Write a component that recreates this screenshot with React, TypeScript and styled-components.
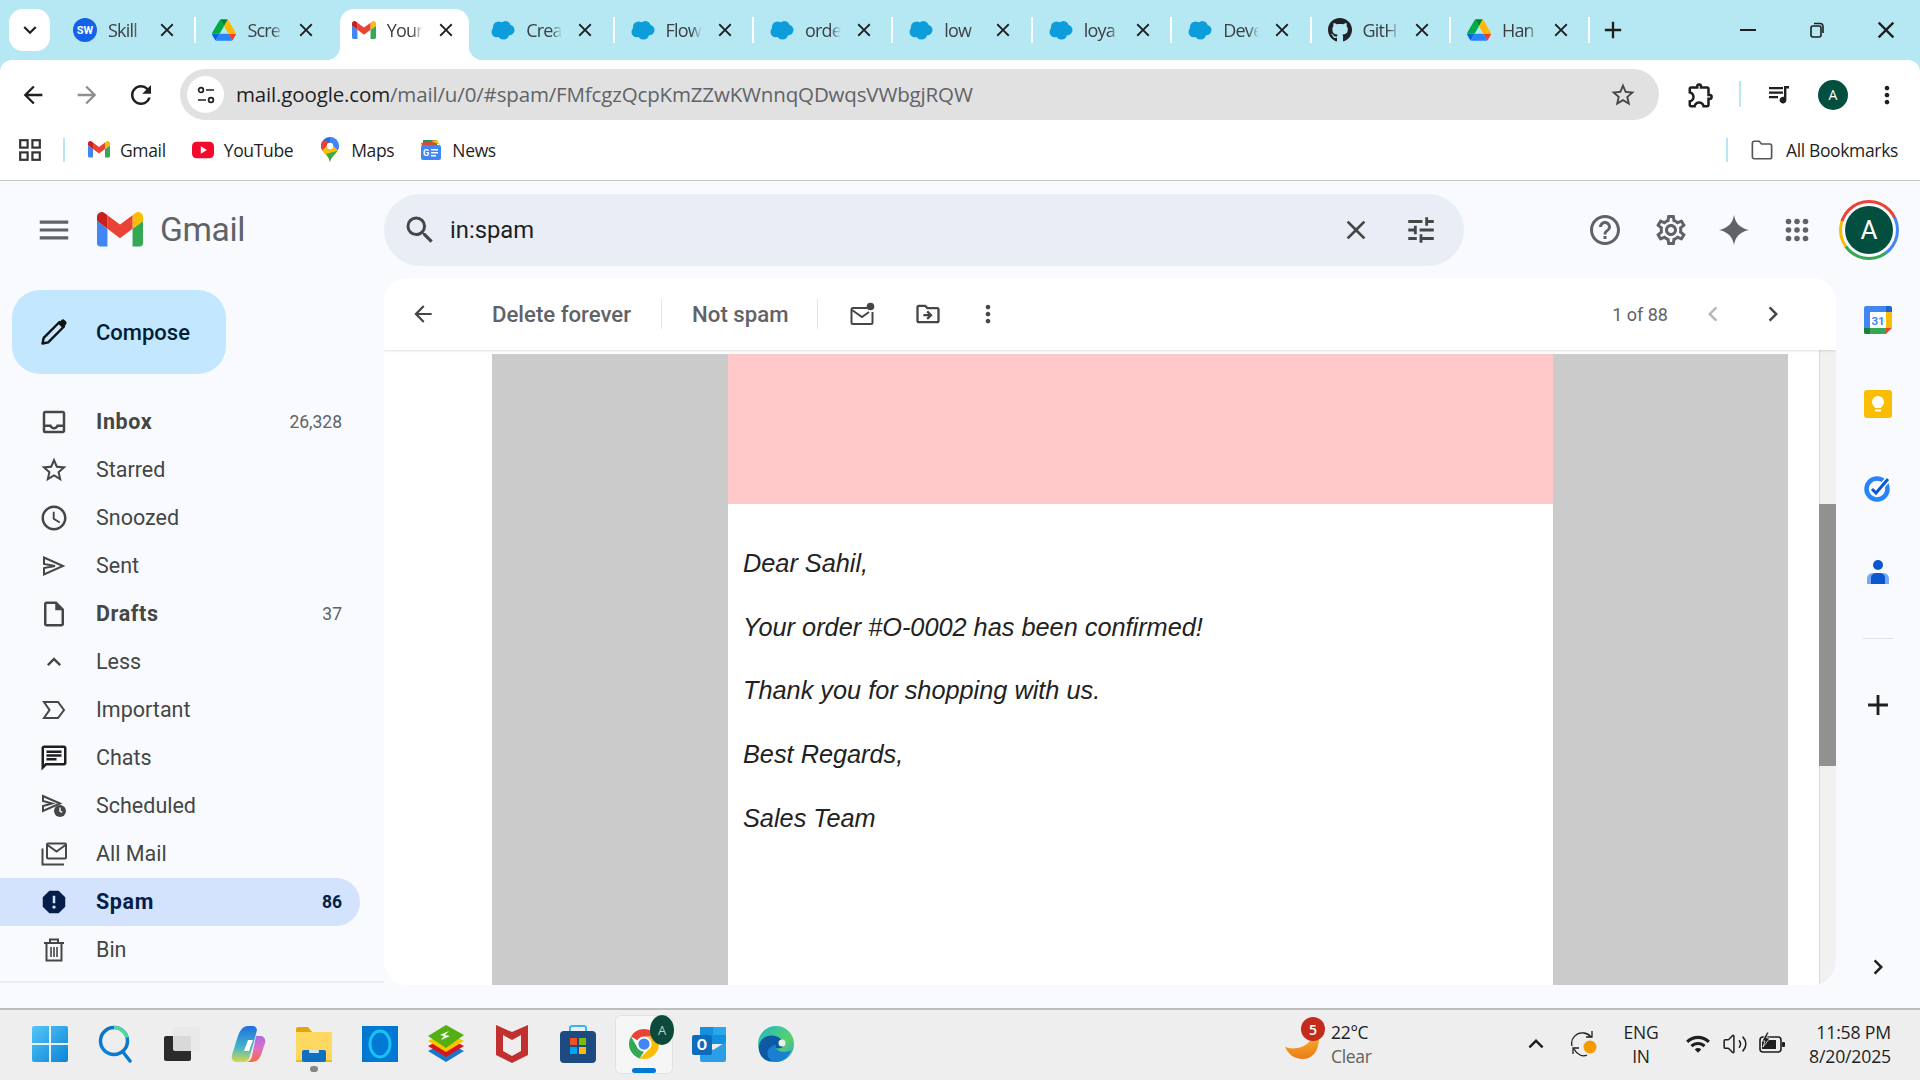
import React from 'react';
import styled, { createGlobalStyle } from 'styled-components';
import { FaGithub } from 'react-icons/fa';
import {
  MdAdd,
  MdArrowBack,
  MdArrowForward,
  MdChevronLeft,
  MdChevronRight,
  MdClose,
  MdExpandLess,
  MdExpandMore,
  MdHelpOutline,
  MdMenu,
  MdMoreVert,
  MdOutlineChat,
  MdOutlineDriveFileMove,
  MdOutlineExtension,
  MdOutlineInsertDriveFile,
  MdOutlineInbox,
  MdOutlineSettings,
  MdOutlineWatchLater,
  MdRefresh,
  MdReport,
  MdSearch,
  MdStarBorder,
  MdTune,
  MdWifi,
} from 'react-icons/md';
import { Volume2 } from 'lucide-react';

const GlobalStyle = createGlobalStyle`
  html, body { margin: 0; padding: 0; background: #fff; }
  body { width: 1920px; height: 1080px; overflow: hidden; font-family: Roboto, "Liberation Sans", sans-serif; }
  * { box-sizing: border-box; }
`;

const uiFont = '"Open Sans", "Noto Sans", sans-serif';

const Page = styled.div`
  width: 1920px;
  height: 1080px;
  display: flex;
  flex-direction: column;
  background: #b6e8f4;
`;

/* ---------- tab strip ---------- */
const TabStrip = styled.div`
  height: 60px;
  display: flex;
  align-items: flex-start;
  padding-left: 9px;
  flex-shrink: 0;
`;

const TabSearch = styled.div`
  width: 41px;
  height: 42px;
  margin-top: 9px;
  margin-right: 6px;
  border-radius: 14px;
  background: #fff;
  display: flex;
  align-items: center;
  justify-content: center;
  color: #1f1f1f;
`;

const Tab = styled.div<{ $active?: boolean; $noSep?: boolean }>`
  position: relative;
  width: ${(p) => (p.$active ? '129.4px' : '139.4px')};
  height: ${(p) => (p.$active ? '51px' : '42px')};
  margin: ${(p) => (p.$active ? '9px 5px 0' : '9px 0 0')};
  padding-left: ${(p) => (p.$active ? '12px' : '17px')};
  display: flex;
  align-items: center;
  color: #1f1f1f;
  background: ${(p) => (p.$active ? '#fff' : 'transparent')};
  border-radius: 14px 14px 0 0;
  ${(p) => (p.$active ? 'padding-bottom: 9px;' : '')}
  ${(p) =>
    p.$noSep
      ? ''
      : `&::after {
    content: '';
    position: absolute;
    right: -1px;
    top: 8px;
    width: 2px;
    height: 26px;
    background: #fff;
  }`}
  ${(p) =>
    p.$active
      ? `&::before {
    content: '';
    position: absolute;
    left: -14px;
    right: -14px;
    bottom: 0;
    height: 14px;
    background:
      radial-gradient(circle at 0 0, #b6e8f4 14px, #fff 14.5px) left bottom / 14px 14px no-repeat,
      radial-gradient(circle at 100% 0, #b6e8f4 14px, #fff 14.5px) right bottom / 14px 14px no-repeat;
  }`
      : ''}
`;

const FavSlot = styled.span`
  width: 24px;
  height: 24px;
  flex-shrink: 0;
  display: flex;
  align-items: center;
  justify-content: center;
`;

const TabTitle = styled.span`
  width: 36px;
  margin-left: 11px;
  margin-right: 2px;
  overflow: hidden;
  white-space: nowrap;
  font: 400 18px ${uiFont};
  letter-spacing: -0.8px;
  color: #3c4043;
  -webkit-mask-image: linear-gradient(90deg, #000 70%, transparent 100%);
  mask-image: linear-gradient(90deg, #000 70%, transparent 100%);
`;

const TabClose = styled.span`
  margin-left: 10px;
  display: flex;
  color: #1f1f1f;
`;

const NewTab = styled.div`
  width: 48px;
  height: 42px;
  margin-top: 9px;
  display: flex;
  align-items: center;
  justify-content: center;
  color: #1f1f1f;
`;

const WindowControls = styled.div`
  margin-left: auto;
  height: 60px;
  display: flex;
  color: #1f1f1f;
`;

const WindowButton = styled.div`
  width: 69px;
  height: 60px;
  display: flex;
  align-items: center;
  justify-content: center;
`;

/* ---------- browser toolbar ---------- */
const BrowserBar = styled.div`
  height: 65px;
  flex-shrink: 0;
  background: #fff;
  border-radius: 12px 12px 0 0;
  display: flex;
  align-items: flex-start;
  padding: 9px 0 0 6px;
`;

const NavButton = styled.div<{ $muted?: boolean }>`
  width: 54px;
  height: 51px;
  display: flex;
  align-items: center;
  justify-content: center;
  color: ${(p) => (p.$muted ? '#8f8f8f' : '#1f1f1f')};
`;

const Omnibox = styled.div`
  width: 1479px;
  height: 51px;
  margin-left: 12px;
  margin-right: 17px;
  padding: 0 22px 0 7px;
  background: #e1e1e1;
  border-radius: 26px;
  display: flex;
  align-items: center;
  color: #474747;
`;

const SiteChip = styled.span`
  width: 37px;
  height: 37px;
  border-radius: 50%;
  background: #fff;
  display: flex;
  align-items: center;
  justify-content: center;
  flex-shrink: 0;
`;

const UrlText = styled.span`
  margin-left: 12px;
  padding-bottom: 2px;
  flex: 1;
  font: 400 20.5px ${uiFont};
  letter-spacing: -0.15px;
  color: #5f6368;
  white-space: nowrap;
`;

const UrlHost = styled.span`
  color: #1f1f1f;
`;

const BarDivider = styled.span`
  width: 2px;
  height: 26px;
  margin: 12px 13px 0;
  background: #b6e8f4;
`;

const ToolSlot = styled.div<{ $w: number }>`
  width: ${(p) => p.$w}px;
  height: 51px;
  display: flex;
  align-items: center;
  justify-content: center;
  color: #1f1f1f;
`;

const MiniAvatar = styled.span`
  width: 30px;
  height: 30px;
  border-radius: 50%;
  background: #024e3f;
  color: #fff;
  font: 400 14px ${uiFont};
  display: flex;
  align-items: center;
  justify-content: center;
`;

/* ---------- bookmarks ---------- */
const BookmarkBar = styled.div`
  height: 56px;
  flex-shrink: 0;
  background: #fff;
  border-bottom: 1px solid #c8c8c8;
  padding: 0 22px 6px 19px;
  display: flex;
  align-items: center;
  gap: 26px;
`;

const BookmarkDivider = styled.span`
  width: 2px;
  height: 24px;
  margin: 0 -3px 0 -4px;
  background: #b6e8f4;
`;

const Bookmark = styled.div<{ $gap?: number }>`
  display: flex;
  align-items: center;
  gap: ${(p) => p.$gap ?? 10}px;
  font: 400 17.5px ${uiFont};
  letter-spacing: -0.35px;
  color: #1f1f1f;
`;

const BookmarkIcon = styled.span`
  width: 22px;
  height: 24px;
  display: flex;
  align-items: center;
  justify-content: center;
`;

const BookmarkEnd = styled.div`
  margin-left: auto;
  display: flex;
  align-items: center;
  gap: 26px;
`;

/* ---------- gmail ---------- */
const Gmail = styled.div`
  flex: 1;
  min-height: 0;
  background: #f8fafd;
  display: flex;
  flex-direction: column;
`;

const GmailHeader = styled.div`
  height: 97px;
  flex-shrink: 0;
  display: flex;
  align-items: flex-start;
`;

const Brand = styled.div`
  width: 384px;
  height: 97px;
  padding-left: 35px;
  display: flex;
  align-items: center;
  gap: 24px;
  color: #5f6368;
`;

const BrandLogo = styled.div`
  display: flex;
  align-items: center;
  gap: 17px;
`;

const BrandName = styled.span`
  font: 400 33.6px Roboto, sans-serif;
  letter-spacing: -0.4px;
  color: #5f6368;
`;

const SearchBar = styled.div`
  width: 1080px;
  height: 72px;
  margin-top: 13px;
  padding: 0 26px 0 18px;
  background: #e9eef6;
  border-radius: 36px;
  display: flex;
  align-items: center;
  gap: 32px;
  color: #444746;
`;

const SearchInput = styled.span`
  flex: 1;
  margin-left: -20px;
  font: 400 23.8px Roboto, sans-serif;
  color: #1f1f1f;
`;

const HeaderTools = styled.div`
  flex: 1;
  height: 72px;
  margin-top: 13px;
  padding-left: 108px;
  display: flex;
  align-items: center;
  color: #5f6368;
`;

const HeaderTool = styled.span<{ $w: number }>`
  width: ${(p) => p.$w}px;
  display: flex;
  justify-content: center;
`;

const AvatarRing = styled.span`
  width: 60px;
  height: 60px;
  margin-left: 9px;
  border-radius: 50%;
  padding: 3px;
  background: conic-gradient(#ea4335 0 18%, #4285f4 18% 40%, #34a853 40% 65%, #fbbc04 65% 80%, #ea4335 80%);
  display: flex;
  flex-shrink: 0;
`;

const AvatarGap = styled.span`
  flex: 1;
  border-radius: 50%;
  padding: 3px;
  background: #f8fafd;
  display: flex;
`;

const AvatarFace = styled.span`
  flex: 1;
  border-radius: 50%;
  background: #024e3f;
  color: #fff;
  font: 400 26px Roboto, sans-serif;
  display: flex;
  align-items: center;
  justify-content: center;
`;

const GmailBody = styled.div`
  flex: 1;
  min-height: 0;
  display: flex;
`;

const Sidebar = styled.nav`
  width: 384px;
  flex-shrink: 0;
  padding-top: 12px;
  display: flex;
  flex-direction: column;
`;

const Compose = styled.div`
  width: 214px;
  height: 84px;
  margin: 0 0 24px 12px;
  padding-left: 27px;
  border-radius: 28px;
  background: #c2e7ff;
  display: flex;
  align-items: center;
  gap: 27px;
  font: 500 22px Roboto, sans-serif;
  color: #001d35;
`;

const NavRow = styled.div<{ $active?: boolean; $bold?: boolean }>`
  width: 360px;
  height: 48px;
  flex-shrink: 0;
  padding: 0 18px 0 39px;
  border-radius: 0 24px 24px 0;
  display: flex;
  align-items: center;
  background: ${(p) => (p.$active ? '#d3e3fd' : 'transparent')};
  color: ${(p) => (p.$active ? '#041e49' : '#444746')};
  font: ${(p) => (p.$bold ? 700 : 400)} 21.5px Roboto, sans-serif;
  letter-spacing: ${(p) => (p.$bold ? '0.6px' : '0')};
`;

const NavIcon = styled.span`
  width: 30px;
  height: 30px;
  flex-shrink: 0;
  margin-right: 27px;
  display: flex;
  align-items: center;
  justify-content: center;
`;

const NavLabel = styled.span<{ $bold?: boolean }>`
  flex: 1;
  margin-top: -1px;
  color: ${(p) => (p.$bold ? 'inherit' : '#444746')};
`;

const NavCount = styled.span<{ $active?: boolean }>`
  font: ${(p) => (p.$active ? 700 : 400)} 17.5px Roboto, sans-serif;
  letter-spacing: 0;
  color: ${(p) => (p.$active ? '#041e49' : '#5f6368')};
`;

const SidebarRule = styled.div`
  margin-top: 7px;
  height: 2px;
  background: #ebedf0;
`;

const MailCard = styled.main`
  width: 1452px;
  height: 707px;
  flex-shrink: 0;
  background: #fff;
  border-radius: 24px;
  overflow: hidden;
  display: flex;
  flex-direction: column;
`;

const MailToolbar = styled.div`
  height: 72px;
  flex-shrink: 0;
  padding: 0 45px 0 19px;
  display: flex;
  align-items: center;
  color: #444746;
  box-shadow: 0 1px 2px rgba(60, 64, 67, 0.16);
  position: relative;
`;

const ToolIcon = styled.span<{ $left: number; $w?: number; $faded?: boolean }>`
  width: ${(p) => p.$w ?? 36}px;
  margin-left: ${(p) => p.$left}px;
  display: flex;
  justify-content: center;
  color: ${(p) => (p.$faded ? '#b4b6b8' : '#444746')};
`;

const ActionText = styled.span<{ $left: number }>`
  margin-left: ${(p) => p.$left}px;
  font: 500 22.2px Roboto, sans-serif;
  color: #5f6368;
`;

const ToolRule = styled.span<{ $left: number }>`
  margin-left: ${(p) => p.$left}px;
  width: 1px;
  height: 30px;
  background: #e6e6e6;
`;

const Pager = styled.div`
  margin-left: auto;
  display: flex;
  align-items: center;
  font: 400 18px Roboto, sans-serif;
  color: #5f6368;
`;

const MailScrollRow = styled.div`
  flex: 1;
  min-height: 0;
  display: flex;
`;

const MailViewport = styled.div`
  flex: 1;
  padding: 4px 31px 0 108px;
  display: flex;
`;

const EmailSide = styled.div<{ $w: number }>`
  width: ${(p) => p.$w}px;
  flex-shrink: 0;
  background: #cbcbcb;
`;

const EmailMiddle = styled.div`
  flex: 1;
  display: flex;
  flex-direction: column;
`;

const EmailBanner = styled.div`
  height: 150px;
  background: #ffc9c9;
`;

const EmailBody = styled.div`
  padding: 44px 15px 0;
  display: flex;
  flex-direction: column;
  gap: 33.7px;
`;

const EmailLine = styled.p`
  margin: 0;
  height: 30px;
  font: italic 400 25.3px/30px "Liberation Sans", Arial, sans-serif;
  color: #222;
`;

const ScrollTrack = styled.div`
  width: 17px;
  flex-shrink: 0;
  background: #f1f1f1;
  border-left: 1px solid #d9d9d9;
  padding-top: 154px;
`;

const ScrollThumb = styled.div`
  height: 262px;
  margin-left: -1px;
  background: #919191;
`;

const SidePanel = styled.aside`
  flex: 1;
  display: flex;
  flex-direction: column;
  align-items: center;
`;

const PanelSlot = styled.span`
  height: 84px;
  display: flex;
  align-items: center;
  justify-content: center;
`;

const PanelRule = styled.span`
  width: 30px;
  height: 1px;
  margin-top: 24px;
  background: #dfe1e5;
`;

const PanelPlus = styled.span`
  margin-top: 49px;
  display: flex;
  color: #1f1f1f;
`;

const PanelExpand = styled.span`
  margin-top: auto;
  margin-bottom: 26px;
  display: flex;
  color: #1f1f1f;
`;

/* ---------- windows taskbar ---------- */
const Taskbar = styled.footer`
  height: 72px;
  flex-shrink: 0;
  background: #eeeeee;
  border-top: 2px solid #bcbcbc;
  padding: 0 29px 2px 17px;
  display: flex;
  align-items: center;
  font-family: ${uiFont};
  position: relative;
`;

const TaskSlot = styled.div<{ $on?: boolean; $dot?: boolean }>`
  position: relative;
  width: 66px;
  height: 60px;
  display: flex;
  align-items: center;
  justify-content: center;
  &::before {
    ${(p) => (p.$on ? "content: '';" : '')}
    position: absolute;
    inset: 1px 4px 0;
    background: #f6f6f6;
    border: 1px solid #e2e2e2;
    border-radius: 6px;
  }
  &::after {
    ${(p) => (p.$on || p.$dot ? "content: '';" : '')}
    position: absolute;
    bottom: ${(p) => (p.$on ? '1px' : '2px')};
    left: 50%;
    transform: translateX(-50%);
    width: ${(p) => (p.$on ? '24px' : '8px')};
    height: ${(p) => (p.$on ? '5px' : '6px')};
    border-radius: 3px;
    background: ${(p) => (p.$on ? '#0078d4' : '#858585')};
  }
  & > svg { position: relative; }
`;

const AppBadge = styled.span`
  position: absolute;
  top: 1px;
  right: 3px;
  width: 24px;
  height: 30px;
  border-radius: 50%;
  background: #0b4a3d;
  color: #b7d4cc;
  font: 400 13px ${uiFont};
  display: flex;
  align-items: center;
  justify-content: center;
`;

const Weather = styled.div`
  margin-left: 476px;
  display: flex;
  align-items: center;
  position: relative;
`;

const WeatherBadge = styled.span`
  position: absolute;
  left: 16px;
  top: -4px;
  width: 24px;
  height: 24px;
  border-radius: 50%;
  background: #c42b1c;
  color: #fff;
  font: 600 14px ${uiFont};
  display: flex;
  align-items: center;
  justify-content: center;
`;

const WeatherText = styled.div`
  margin-left: 10px;
  display: flex;
  flex-direction: column;
  gap: 2px;
  font-size: 17.5px;
  line-height: 22px;
  letter-spacing: -0.3px;
  color: #1f1f1f;
`;

const WeatherState = styled.span`
  color: #616161;
`;

const Tray = styled.div`
  margin-left: auto;
  display: flex;
  align-items: center;
  color: #1f1f1f;
`;

const TraySlot = styled.span<{ $w: number }>`
  width: ${(p) => p.$w}px;
  display: flex;
  align-items: center;
  justify-content: center;
`;

const LangBlock = styled.span`
  width: 60px;
  margin: 0 8px 0 3px;
  display: flex;
  flex-direction: column;
  align-items: center;
  gap: 2px;
  font-size: 17.5px;
  line-height: 22px;
  letter-spacing: -0.2px;
`;

const Clock = styled.span`
  width: 90px;
  margin-left: 11px;
  display: flex;
  flex-direction: column;
  align-items: flex-end;
  gap: 2px;
  font-size: 17.7px;
  line-height: 22px;
  letter-spacing: -0.2px;
  white-space: nowrap;
`;

/* ---------- drawings ---------- */
function GmailLogo({ size }: { size: number }) {
  return (
    <svg width={size} height={(size * 66) / 88} viewBox="52 42 88 66">
      <path fill="#4285f4" d="M58 108h14V74L52 59v43c0 3.32 2.69 6 6 6" />
      <path fill="#34a853" d="M120 108h14c3.32 0 6-2.69 6-6V59l-20 15" />
      <path fill="#fbbc04" d="M120 48v26l20-15v-8c0-7.42-8.47-11.65-14.4-7.2" />
      <path fill="#ea4335" d="M72 74V48l24 18 24-18v26L96 92" />
      <path fill="#c5221f" d="M52 51v8l20 15V48l-5.6-4.2c-5.94-4.45-14.4-.22-14.4 7.2" />
    </svg>
  );
}

function DriveLogo() {
  return (
    <svg width="24" height="22" viewBox="0 0 87.3 78">
      <path d="m6.6 66.85 3.85 6.65c.8 1.4 1.95 2.5 3.3 3.3l13.75-23.8h-27.5c0 1.55.4 3.1 1.2 4.5z" fill="#0066da" />
      <path d="m43.65 25-13.75-23.8c-1.35.8-2.5 1.9-3.3 3.3l-25.4 44a9.06 9.06 0 0 0 -1.2 4.5h27.5z" fill="#00ac47" />
      <path d="m73.55 76.8c1.35-.8 2.5-1.9 3.3-3.3l1.6-2.75 7.65-13.25c.8-1.4 1.2-2.95 1.2-4.5h-27.502l5.852 11.5z" fill="#ea4335" />
      <path d="m43.65 25 13.75-23.8c-1.35-.8-2.9-1.2-4.5-1.2h-18.5c-1.6 0-3.15.45-4.5 1.2z" fill="#00832d" />
      <path d="m59.8 53h-32.3l-13.75 23.8c1.35.8 2.9 1.2 4.5 1.2h50.8c1.6 0 3.15-.45 4.5-1.2z" fill="#2684fc" />
      <path d="m73.4 26.5-12.7-22c-.8-1.4-1.95-2.5-3.3-3.3l-13.75 23.8 16.15 28h27.45c0-1.55-.4-3.1-1.2-4.5z" fill="#ffba00" />
    </svg>
  );
}

function CloudLogo() {
  return (
    <svg width="25" height="21" viewBox="0 0 25 21" fill="#0d9dda">
      <circle cx="8" cy="7" r="6" />
      <circle cx="15" cy="6" r="5.5" />
      <circle cx="19" cy="10" r="5.5" />
      <circle cx="13" cy="14" r="6" />
      <circle cx="6" cy="12" r="5.5" />
    </svg>
  );
}

function SwLogo() {
  return (
    <svg width="24" height="24" viewBox="0 0 24 24">
      <circle cx="12" cy="12" r="12" fill="#1263e8" />
      <text x="12" y="16" fontSize="11" fontWeight="700" fontFamily="Roboto" fill="#fff" textAnchor="middle">
        SW
      </text>
    </svg>
  );
}

function RestoreIcon() {
  return (
    <svg width="18" height="18" viewBox="0 0 18 18" fill="none" stroke="#1f1f1f" strokeWidth="1.6">
      <rect x="3" y="5" width="10" height="11" rx="2" />
      <path d="M6 2.5h6a3 3 0 0 1 3 3V12" />
    </svg>
  );
}

function SiteTuneIcon() {
  return (
    <svg width="20" height="20" viewBox="0 0 20 20" fill="none" stroke="#1f1f1f" strokeWidth="1.7">
      <circle cx="5" cy="5" r="2.4" />
      <path d="M10 5h8M2 15h8" />
      <circle cx="15" cy="15" r="2.4" />
    </svg>
  );
}

function MediaIcon() {
  return (
    <svg width="24" height="24" viewBox="0 0 24 24" fill="#1f1f1f">
      <path d="M2 4h14v2.2H2zM2 8.5h14v2.2H2zM2 13h9v2.2H2z" />
      <path d="M17 3h5v2.6h-2.6V17a3.4 3.4 0 1 1-2.4-3.2z" />
    </svg>
  );
}

function AppsSquares() {
  return (
    <svg width="22" height="22" viewBox="0 0 22 22" fill="none" stroke="#333" strokeWidth="2.2">
      <rect x="1.2" y="1.2" width="7.4" height="7.4" />
      <rect x="13.4" y="1.2" width="7.4" height="7.4" />
      <rect x="1.2" y="13.4" width="7.4" height="7.4" />
      <rect x="13.4" y="13.4" width="7.4" height="7.4" />
    </svg>
  );
}

function YoutubeLogo() {
  return (
    <svg width="24" height="18" viewBox="0 0 24 18">
      <rect width="24" height="18" rx="5" fill="#f50a2e" />
      <path d="M9.6 5v8l6.6-4z" fill="#fff" />
    </svg>
  );
}

function MapsLogo() {
  return (
    <svg width="18" height="25" viewBox="0 0 18 25">
      <path d="M9 0a9 9 0 0 1 7.6 13.8L9 6z" fill="#4285f4" />
      <path d="M9 0a9 9 0 0 0-6.8 3L9 9z" fill="#1a73e8" />
      <path d="M2.2 3A9 9 0 0 0 1.4 13.8L9 6z" fill="#ea4335" />
      <path d="M1.4 13.8 9 6l7.6 7.8c-2.4 3.4-6.2 6-7.6 11.2-1.4-5.2-5.2-7.8-7.6-11.2z" fill="#fbbc04" />
      <path d="M16.6 13.8 5 16.9c1.8 2.2 3.3 4.5 4 8.1 1.4-5.2 5.2-7.8 7.6-11.2z" fill="#34a853" />
      <circle cx="9" cy="9" r="3.2" fill="#fff" />
    </svg>
  );
}

function NewsLogo() {
  return (
    <svg width="22" height="22" viewBox="0 0 22 22">
      <path d="M3 1h14v6H3z" fill="#0c9d58" />
      <path d="M1 4l13-3 2 6H2z" fill="#ea4335" opacity=".9" />
      <path d="M20 6 11 2l6-1z" fill="#fbbc04" />
      <rect x="1" y="6" width="20" height="15" rx="2" fill="#4285f4" />
      <text x="6" y="17" fontSize="9" fontWeight="700" fontFamily="Roboto" fill="#fff" textAnchor="middle">
        G
      </text>
      <path d="M11 10h7v1.6h-7zM11 13h7v1.6h-7zM11 16h5v1.6h-5z" fill="#fff" />
    </svg>
  );
}

function FolderOutline() {
  return (
    <svg width="24" height="22" viewBox="0 0 24 22" fill="none" stroke="#555" strokeWidth="1.8">
      <path d="M1.5 3.5a2 2 0 0 1 2-2H9l2.5 3h9a2 2 0 0 1 2 2v12a2 2 0 0 1-2 2h-17a2 2 0 0 1-2-2z" />
    </svg>
  );
}

function PenIcon() {
  return (
    <svg width="30" height="30" viewBox="0 0 30 30" fill="none">
      <path d="M3.5 26.5l1.2-5.6L20.5 5l4.5 4.5L9.2 25.3z" stroke="#111" strokeWidth="2.4" strokeLinejoin="round" />
      <path d="M19 6.5l3.3-3.3a2.4 2.4 0 0 1 3.4 0l1.1 1.1a2.4 2.4 0 0 1 0 3.4L23.5 11z" fill="#111" />
    </svg>
  );
}

function SentIcon() {
  return (
    <svg width="24" height="22" viewBox="0 0 24 22" fill="none" stroke="#444746" strokeWidth="2">
      <path d="M2 2.5 21 11 2 19.5V13l11-2-11-2z" strokeLinejoin="miter" />
    </svg>
  );
}

function ImportantIcon() {
  return (
    <svg width="24" height="20" viewBox="0 0 24 20" fill="none" stroke="#444746" strokeWidth="2">
      <path d="M2 2h14l6 8-6 8H2l5.5-8z" />
    </svg>
  );
}

function ScheduledIcon() {
  return (
    <svg width="26" height="24" viewBox="0 0 26 24">
      <path d="M2 2 19 9.5 2 17V12l9-2.5L2 7z" fill="none" stroke="#444746" strokeWidth="2" />
      <circle cx="19" cy="17" r="6" fill="#444746" />
      <path d="M19 13.5V17l2.2 1.4" stroke="#f8fafd" strokeWidth="1.4" fill="none" />
    </svg>
  );
}

function AllMailIcon() {
  return (
    <svg width="27" height="24" viewBox="0 0 27 24" fill="none" stroke="#444746" strokeWidth="2">
      <rect x="6" y="1.5" width="19" height="15" rx="1" />
      <path d="M6.5 3l9 6.5 9-6.5" />
      <path d="M1.5 6.5v16H23" />
    </svg>
  );
}

function BinIcon() {
  return (
    <svg width="22" height="24" viewBox="0 0 22 24" fill="none" stroke="#444746" strokeWidth="2">
      <path d="M1 5h20M7 5V1.5h8V5" />
      <path d="M3.5 5v17.500h15V5" />
      <path d="M8 9v10M11 9v10M14 9v10" strokeWidth="1.6" />
    </svg>
  );
}

function UnreadIcon() {
  return (
    <svg width="26" height="24" viewBox="0 0 26 24">
      <path d="M19 6H4a1.5 1.5 0 0 0-1.5 1.5v13A1.5 1.5 0 0 0 4 22h18a1.5 1.5 0 0 0 1.5-1.5V10" fill="none" stroke="#444746" strokeWidth="2" />
      <path d="M3 8l10 7 7-5" fill="none" stroke="#444746" strokeWidth="2" />
      <circle cx="21.5" cy="4.5" r="3.8" fill="#444746" />
    </svg>
  );
}

function SparkIcon() {
  return (
    <svg width="32" height="32" viewBox="0 0 32 32" fill="#5f6368">
      <path d="M16 1c1.5 8.5 6 13 15 15-9 2-13.5 6.500-15 15-1.500-8.500-6-13-15-15 9-2 13.5-6.500 15-15z" />
    </svg>
  );
}

function DotGrid() {
  const cells = [3.5, 12, 20.5];
  return (
    <svg width="24" height="24" viewBox="0 0 24 24" fill="#5f6368">
      {cells.map((y) => cells.map((x) => <circle key={`${x}-${y}`} cx={x} cy={y} r="2.8" />))}
    </svg>
  );
}

function CalendarLogo() {
  return (
    <svg width="28" height="28" viewBox="0 0 28 28">
      <rect width="28" height="28" rx="2" fill="#fff" />
      <path d="M2 0h20v6H6v16H0V2a2 2 0 0 1 2-2z" fill="#4285f4" />
      <path d="M22 0h4a2 2 0 0 1 2 2v4h-6z" fill="#1967d2" />
      <path d="M22 6h6v16h-6z" fill="#fbbc04" />
      <path d="M6 22h16v6H2a2 2 0 0 1-2-2v-4z" fill="#34a853" />
      <path d="M0 22h6v6H2a2 2 0 0 1-2-2z" fill="#188038" />
      <path d="M22 22h6l-6 6z" fill="#ea4335" />
      <text x="14" y="19" fontSize="11.5" fontWeight="700" fontFamily="Roboto" fill="#4285f4" textAnchor="middle">
        31
      </text>
    </svg>
  );
}

function KeepLogo() {
  return (
    <svg width="28" height="28" viewBox="0 0 28 28">
      <rect width="28" height="28" rx="3" fill="#fbbc04" />
      <circle cx="14" cy="12" r="6" fill="#fff" />
      <rect x="11" y="14" width="6" height="4" fill="#fff" />
      <rect x="11" y="19.5" width="6" height="2" fill="#fff" />
    </svg>
  );
}

function TasksLogo() {
  return (
    <svg width="28" height="28" viewBox="0 0 28 28" fill="none">
      <circle cx="13" cy="15" r="10.5" stroke="#2684fc" strokeWidth="4.5" />
      <path d="M8 15l4 4L25 4" stroke="#fff" strokeWidth="6" />
      <path d="M8 15l4 4L24 5" stroke="#0b57d0" strokeWidth="3" />
    </svg>
  );
}

function ContactsLogo() {
  return (
    <svg width="24" height="26" viewBox="0 0 24 26">
      <path d="M1 25v-5c0-4 3-6 6-6h10c3 0 6 2 6 6v5z" fill="#7ba7f7" />
      <path d="M5 25v-6c0-3 2-5 7-5s7 2 7 5v6z" fill="#0b57d0" />
      <circle cx="12" cy="6" r="5" fill="#0b57d0" />
    </svg>
  );
}

function WindowsLogo() {
  return (
    <svg width="36" height="36" viewBox="0 0 36 36">
      <defs>
        <linearGradient id="winA" x1="0" y1="0" x2="1" y2="1">
          <stop offset="0" stopColor="#52c6f8" />
          <stop offset="1" stopColor="#0a84d8" />
        </linearGradient>
      </defs>
      <path d="M2 0h15v17H0V2a2 2 0 0 1 2-2zM19 0h15a2 2 0 0 1 2 2v15H19zM0 19h17v17H2a2 2 0 0 1-2-2zM19 19h17v15a2 2 0 0 1-2 2H19z" fill="url(#winA)" />
    </svg>
  );
}

function SearchGlass() {
  return (
    <svg width="36" height="38" viewBox="0 0 36 38" fill="none">
      <defs>
        <linearGradient id="glass" x1="0" y1="0" x2="1" y2="1">
          <stop offset="0" stopColor="#0a6fc2" />
          <stop offset="0.55" stopColor="#0a84d8" />
          <stop offset="1" stopColor="#0a6fc2" />
        </linearGradient>
      </defs>
      <circle cx="16" cy="16" r="13.5" stroke="url(#glass)" strokeWidth="3.5" />
      <path d="M16 2.5a13.5 13.5 0 0 1 13 10" stroke="#57d6a0" strokeWidth="3.5" />
      <path d="M25 27l7 9" stroke="#0a78cc" strokeWidth="3.5" strokeLinecap="round" />
    </svg>
  );
}

function TaskViewIcon() {
  return (
    <svg width="36" height="36" viewBox="0 0 36 36">
      <rect x="0" y="10" width="27" height="25" rx="2" fill="#2b2b2b" />
      <rect x="9" y="1" width="27" height="24" rx="2" fill="#e8e8e8" opacity=".92" />
    </svg>
  );
}

function CopilotIcon() {
  return (
    <svg width="36" height="38" viewBox="0 0 36 38">
      <defs>
        <linearGradient id="copA" x1="0" y1="0" x2="0" y2="1">
          <stop offset="0" stopColor="#1f6fe0" />
          <stop offset="0.6" stopColor="#45b6c8" />
          <stop offset="1" stopColor="#d8d84a" />
        </linearGradient>
        <linearGradient id="copB" x1="0" y1="0" x2="0" y2="1">
          <stop offset="0" stopColor="#a96ee0" />
          <stop offset="0.5" stopColor="#e070c0" />
          <stop offset="1" stopColor="#f56b3a" />
        </linearGradient>
      </defs>
      <path d="M18 1h5c2 0 3 1 4 4l-7 26c-1 4-3 6-7 6H7c-4 0-6-3-5-7l5-16c2-7 5-13 11-13z" fill="url(#copA)" />
      <path d="M26 11h4c4 0 6 3 5 7l-4 12c-2 5-5 7-10 7h-6c4 0 6-2 7-6l4-20z" fill="url(#copB)" />
      <path d="M18 15h5l-4 11h-5z" fill="#fff" />
    </svg>
  );
}

function ExplorerIcon() {
  return (
    <svg width="36" height="36" viewBox="0 0 36 36">
      <path d="M0 3a2 2 0 0 1 2-2h10l4 5H0z" fill="#e0a50f" />
      <path d="M0 6h36v30H0z" fill="#ffd862" />
      <path d="M0 34h36v2H0z" fill="#f3b917" />
      <rect x="6" y="24" width="24" height="12" rx="2" fill="#0f6fc2" />
      <rect x="13" y="24" width="10" height="3" rx="1" fill="#cde6f8" />
    </svg>
  );
}

function AlexaTile() {
  return (
    <svg width="36" height="36" viewBox="0 0 36 36" fill="none">
      <rect width="36" height="36" fill="#0078d4" />
      <ellipse cx="18" cy="18" rx="10" ry="13" stroke="#17c3f5" strokeWidth="3" />
    </svg>
  );
}

function StacksIcon() {
  return (
    <svg width="36" height="38" viewBox="0 0 36 38">
      <path d="M18 17l18 9-18 11L0 26z" fill="#1977c9" />
      <path d="M18 12l18 9-18 11L0 21z" fill="#d8141c" />
      <path d="M18 7l18 9-18 11L0 16z" fill="#f7c600" />
      <path d="M18 0l18 10-18 13L0 11z" fill="#54b012" />
      <path d="M12 10l9-4-4 4 5 1-9 4 3-4z" fill="#fff" />
    </svg>
  );
}

function McAfeeIcon() {
  return (
    <svg width="32" height="38" viewBox="0 0 32 38">
      <path d="M0 0l16 7 16-7v30L16 38 0 30zM7 10v16l9 5 9-5V10l-9 5z" fill="#c1302e" fillRule="evenodd" />
    </svg>
  );
}

function StoreIcon() {
  return (
    <svg width="36" height="38" viewBox="0 0 36 38" fill="none">
      <path d="M10 8V3a2 2 0 0 1 2-2h12a2 2 0 0 1 2 2v5" stroke="#35b6f2" strokeWidth="2" />
      <rect y="6" width="36" height="32" rx="4" fill="#1d4a80" />
      <rect x="10" y="13" width="7" height="7" fill="#f25022" />
      <rect x="19" y="13" width="7" height="7" fill="#7fba00" />
      <rect x="10" y="22" width="7" height="7" fill="#00a4ef" />
      <rect x="19" y="22" width="7" height="7" fill="#ffb900" />
    </svg>
  );
}

function ChromeIcon() {
  return (
    <svg width="36" height="36" viewBox="0 0 48 48">
      <path d="M24 4a20 20 0 0 1 17.3 10H24a10 10 0 0 0-8.7 5L6.7 14A20 20 0 0 1 24 4z" fill="#ea4335" />
      <path d="M6.7 14l8.6 15A10 10 0 0 0 24 34l-5.8 9.2A20 20 0 0 1 6.7 14z" fill="#34a853" />
      <path d="M41.3 14A20 20 0 0 1 24 44l-5.8-.8L32.700 29A10 10 0 0 0 24 14z" fill="#fbbc04" />
      <circle cx="24" cy="24" r="9.5" fill="#fff" />
      <circle cx="24" cy="24" r="7.5" fill="#4285f4" />
    </svg>
  );
}

function OutlookIcon() {
  return (
    <svg width="36" height="36" viewBox="0 0 36 36">
      <rect x="8" y="1" width="26" height="17" fill="#1490df" />
      <rect x="21" y="1" width="13" height="8" fill="#28a8ea" />
      <path d="M8 16l13 8 13-8v18a2 2 0 0 1-2 2H10a2 2 0 0 1-2-2z" fill="#2a9fe8" />
      <rect y="9" width="20" height="20" rx="2" fill="#0f6cbd" />
      <text x="10" y="24" fontSize="15" fontWeight="700" fontFamily="Roboto" fill="#fff" textAnchor="middle">
        O
      </text>
    </svg>
  );
}

function EdgeIcon() {
  return (
    <svg width="36" height="36" viewBox="0 0 36 36">
      <defs>
        <linearGradient id="edgeA" x1="0" y1="0" x2="1" y2="1">
          <stop offset="0" stopColor="#1fb8c8" />
          <stop offset="0.6" stopColor="#58d26a" />
          <stop offset="1" stopColor="#2d9fd8" />
        </linearGradient>
      </defs>
      <circle cx="18" cy="18" r="18" fill="url(#edgeA)" />
      <path d="M1 20C2 11 12 7 20 11c6 3 7 9 3 11-3 1-7 0-7-3-2 5 3 9 10 8-3 6-10 10-16 8C4 33 0 27 1 20z" fill="#0c59a4" />
      <path d="M18 19c-1 4 3 7 8 7 3 0 5-1 7-2-2 7-8 12-15 12-6 0-10-6-8-12 2-3 5-5 8-5z" fill="#1a7fd0" />
      <circle cx="24" cy="17" r="3.5" fill="#eeeeee" />
    </svg>
  );
}

function MoonIcon() {
  return (
    <svg width="36" height="36" viewBox="0 0 36 36">
      <defs>
        <linearGradient id="moonA" x1="0" y1="0" x2="0" y2="1">
          <stop offset="0" stopColor="#f7b52c" />
          <stop offset="1" stopColor="#ec7a18" />
        </linearGradient>
      </defs>
      <path d="M33 8c3 12-3 25-15 25C9 33 3 28 0 21c8 3 19 1 24-5 3-3 6-6 9-8z" fill="url(#moonA)" />
    </svg>
  );
}

function SyncIcon() {
  return (
    <svg width="28" height="28" viewBox="0 0 28 28" fill="none" stroke="#1f1f1f" strokeWidth="1.3">
      <path d="M2 16c-2-8 5-14 12-13 3 .4 5 1.5 7 4" />
      <path d="M22 1v6h-6M3 24v-6h6" />
      <path d="M4 19c3 6 9 8 13 6" />
      <circle cx="20" cy="17" r="6.5" fill="#f59b00" stroke="none" />
    </svg>
  );
}

function BatteryIcon() {
  return (
    <svg width="26" height="24" viewBox="0 0 26 24">
      <rect x="1" y="5" width="21" height="15" rx="3" fill="none" stroke="#1f1f1f" strokeWidth="1.6" />
      <rect x="3" y="8" width="14" height="9" fill="#1f1f1f" />
      <rect x="23" y="10" width="3" height="5" rx="1" fill="#1f1f1f" />
      <path d="M8 0 3 9h3l-2 6 7-9H7.5L10 0z" fill="#1f1f1f" stroke="#eeeeee" strokeWidth=".8" />
    </svg>
  );
}

/* ---------- data ---------- */
const tabs: { title: string; icon: React.ReactNode; active?: boolean; noSep?: boolean }[] = [
  { title: 'Skill', icon: <SwLogo /> },
  { title: 'Scre', icon: <DriveLogo />, noSep: true },
  { title: 'Your', icon: <GmailLogo size={24} />, active: true, noSep: true },
  { title: 'Crea', icon: <CloudLogo /> },
  { title: 'Flow', icon: <CloudLogo /> },
  { title: 'orde', icon: <CloudLogo /> },
  { title: 'low', icon: <CloudLogo /> },
  { title: 'loya', icon: <CloudLogo /> },
  { title: 'Deve', icon: <CloudLogo /> },
  { title: 'GitH', icon: <FaGithub size={26} color="#1f2328" /> },
  { title: 'Han', icon: <DriveLogo /> },
];

const navItems: { label: string; icon: React.ReactNode; count?: string; bold?: boolean; active?: boolean }[] = [
  { label: 'Inbox', icon: <MdOutlineInbox size={30} />, count: '26,328', bold: true },
  { label: 'Starred', icon: <MdStarBorder size={30} /> },
  { label: 'Snoozed', icon: <MdOutlineWatchLater size={30} /> },
  { label: 'Sent', icon: <SentIcon /> },
  { label: 'Drafts', icon: <MdOutlineInsertDriveFile size={30} />, count: '37', bold: true },
  { label: 'Less', icon: <MdExpandLess size={28} /> },
  { label: 'Important', icon: <ImportantIcon /> },
  { label: 'Chats', icon: <MdOutlineChat size={30} color="#1f1f1f" /> },
  { label: 'Scheduled', icon: <ScheduledIcon /> },
  { label: 'All Mail', icon: <AllMailIcon /> },
  { label: 'Spam', icon: <MdReport size={30} />, count: '86', bold: true, active: true },
  { label: 'Bin', icon: <BinIcon /> },
];

const emailLines = [
  'Dear Sahil,',
  'Your order #O-0002 has been confirmed!',
  'Thank you for shopping with us.',
  'Best Regards,',
  'Sales Team',
];

export default function App() {
  return (
    <Page>
      <GlobalStyle />
      <TabStrip>
        <TabSearch>
          <MdExpandMore size={26} />
        </TabSearch>
        {tabs.map((t) => (
          <Tab key={t.title} $active={t.active} $noSep={t.noSep}>
            <FavSlot>{t.icon}</FavSlot>
            <TabTitle>{t.title}</TabTitle>
            <TabClose>
              <MdClose size={22} />
            </TabClose>
          </Tab>
        ))}
        <NewTab>
          <MdAdd size={28} />
        </NewTab>
        <WindowControls>
          <WindowButton>
            <svg width="16" height="2" viewBox="0 0 16 2">
              <rect width="16" height="2" fill="#1f1f1f" />
            </svg>
          </WindowButton>
          <WindowButton>
            <RestoreIcon />
          </WindowButton>
          <WindowButton>
            <MdClose size={28} />
          </WindowButton>
        </WindowControls>
      </TabStrip>

      <BrowserBar>
        <NavButton>
          <MdArrowBack size={28} />
        </NavButton>
        <NavButton $muted>
          <MdArrowForward size={28} />
        </NavButton>
        <NavButton>
          <MdRefresh size={30} />
        </NavButton>
        <Omnibox>
          <SiteChip>
            <SiteTuneIcon />
          </SiteChip>
          <UrlText>
            <UrlHost>mail.google.com</UrlHost>/mail/u/0/#spam/FMfcgzQcpKmZZwKWnnqQDwqsVWbgjRQW
          </UrlText>
          <MdStarBorder size={28} />
        </Omnibox>
        <ToolSlot $w={50}>
          <MdOutlineExtension size={30} />
        </ToolSlot>
        <BarDivider />
        <ToolSlot $w={50}>
          <MediaIcon />
        </ToolSlot>
        <ToolSlot $w={58}>
          <MiniAvatar>A</MiniAvatar>
        </ToolSlot>
        <ToolSlot $w={50}>
          <MdMoreVert size={28} />
        </ToolSlot>
      </BrowserBar>

      <BookmarkBar>
        <AppsSquares />
        <BookmarkDivider />
        <Bookmark>
          <BookmarkIcon>
            <GmailLogo size={22} />
          </BookmarkIcon>
          Gmail
        </Bookmark>
        <Bookmark>
          <BookmarkIcon>
            <YoutubeLogo />
          </BookmarkIcon>
          YouTube
        </Bookmark>
        <Bookmark>
          <BookmarkIcon>
            <MapsLogo />
          </BookmarkIcon>
          Maps
        </Bookmark>
        <Bookmark>
          <BookmarkIcon>
            <NewsLogo />
          </BookmarkIcon>
          News
        </Bookmark>
        <BookmarkEnd>
          <BookmarkDivider />
          <Bookmark $gap={13}>
            <BookmarkIcon>
              <FolderOutline />
            </BookmarkIcon>
            All Bookmarks
          </Bookmark>
        </BookmarkEnd>
      </BookmarkBar>

      <Gmail>
        <GmailHeader>
          <Brand>
            <MdMenu size={38} />
            <BrandLogo>
              <GmailLogo size={46} />
              <BrandName>Gmail</BrandName>
            </BrandLogo>
          </Brand>
          <SearchBar>
            <MdSearch size={36} />
            <SearchInput>in:spam</SearchInput>
            <MdClose size={32} />
            <MdTune size={34} />
          </SearchBar>
          <HeaderTools>
            <HeaderTool $w={66}>
              <MdHelpOutline size={36} />
            </HeaderTool>
            <HeaderTool $w={66}>
              <MdOutlineSettings size={36} />
            </HeaderTool>
            <HeaderTool $w={60}>
              <SparkIcon />
            </HeaderTool>
            <HeaderTool $w={66}>
              <DotGrid />
            </HeaderTool>
            <AvatarRing>
              <AvatarGap>
                <AvatarFace>A</AvatarFace>
              </AvatarGap>
            </AvatarRing>
          </HeaderTools>
        </GmailHeader>

        <GmailBody>
          <Sidebar>
            <Compose>
              <PenIcon />
              Compose
            </Compose>
            {navItems.map((n) => (
              <NavRow key={n.label} $active={n.active} $bold={n.bold}>
                <NavIcon>{n.icon}</NavIcon>
                <NavLabel $bold={n.bold}>{n.label}</NavLabel>
                {n.count && <NavCount $active={n.active}>{n.count}</NavCount>}
              </NavRow>
            ))}
            <SidebarRule />
          </Sidebar>

          <MailCard>
            <MailToolbar>
              <ToolIcon $left={0} $w={40}>
                <MdArrowBack size={26} />
              </ToolIcon>
              <ActionText $left={49}>Delete forever</ActionText>
              <ToolRule $left={30} />
              <ActionText $left={30}>Not spam</ActionText>
              <ToolRule $left={28} />
              <ToolIcon $left={26}>
                <UnreadIcon />
              </ToolIcon>
              <ToolIcon $left={30}>
                <MdOutlineDriveFileMove size={28} />
              </ToolIcon>
              <ToolIcon $left={24}>
                <MdMoreVert size={28} />
              </ToolIcon>
              <Pager>
                1 of 88
                <ToolIcon $left={27} $faded>
                  <MdChevronLeft size={30} />
                </ToolIcon>
                <ToolIcon $left={24}>
                  <MdChevronRight size={30} />
                </ToolIcon>
              </Pager>
            </MailToolbar>
            <MailScrollRow>
              <MailViewport>
                <EmailSide $w={236} />
                <EmailMiddle>
                  <EmailBanner />
                  <EmailBody>
                    {emailLines.map((line) => (
                      <EmailLine key={line}>{line}</EmailLine>
                    ))}
                  </EmailBody>
                </EmailMiddle>
                <EmailSide $w={235} />
              </MailViewport>
              <ScrollTrack>
                <ScrollThumb />
              </ScrollTrack>
            </MailScrollRow>
          </MailCard>

          <SidePanel>
            <PanelSlot>
              <CalendarLogo />
            </PanelSlot>
            <PanelSlot>
              <KeepLogo />
            </PanelSlot>
            <PanelSlot>
              <TasksLogo />
            </PanelSlot>
            <PanelSlot>
              <ContactsLogo />
            </PanelSlot>
            <PanelRule />
            <PanelPlus>
              <MdAdd size={34} />
            </PanelPlus>
            <PanelExpand>
              <MdChevronRight size={30} />
            </PanelExpand>
          </SidePanel>
        </GmailBody>
      </Gmail>

      <Taskbar>
        <TaskSlot>
          <WindowsLogo />
        </TaskSlot>
        <TaskSlot>
          <SearchGlass />
        </TaskSlot>
        <TaskSlot>
          <TaskViewIcon />
        </TaskSlot>
        <TaskSlot>
          <CopilotIcon />
        </TaskSlot>
        <TaskSlot $dot>
          <ExplorerIcon />
        </TaskSlot>
        <TaskSlot>
          <AlexaTile />
        </TaskSlot>
        <TaskSlot>
          <StacksIcon />
        </TaskSlot>
        <TaskSlot>
          <McAfeeIcon />
        </TaskSlot>
        <TaskSlot>
          <StoreIcon />
        </TaskSlot>
        <TaskSlot $on>
          <ChromeIcon />
          <AppBadge>A</AppBadge>
        </TaskSlot>
        <TaskSlot>
          <OutlookIcon />
        </TaskSlot>
        <TaskSlot>
          <EdgeIcon />
        </TaskSlot>
        <Weather>
          <MoonIcon />
          <WeatherBadge>5</WeatherBadge>
          <WeatherText>
            <span>22°C</span>
            <WeatherState>Clear</WeatherState>
          </WeatherText>
        </Weather>
        <Tray>
          <TraySlot $w={48}>
            <MdExpandLess size={30} />
          </TraySlot>
          <TraySlot $w={48}>
            <SyncIcon />
          </TraySlot>
          <LangBlock>
            <span>ENG</span>
            <span>IN</span>
          </LangBlock>
          <TraySlot $w={37}>
            <MdWifi size={26} />
          </TraySlot>
          <TraySlot $w={37}>
            <Volume2 size={26} strokeWidth={1.4} />
          </TraySlot>
          <TraySlot $w={37}>
            <BatteryIcon />
          </TraySlot>
          <Clock>
            <span>11:58 PM</span>
            <span>8/20/2025</span>
          </Clock>
        </Tray>
      </Taskbar>
    </Page>
  );
}
